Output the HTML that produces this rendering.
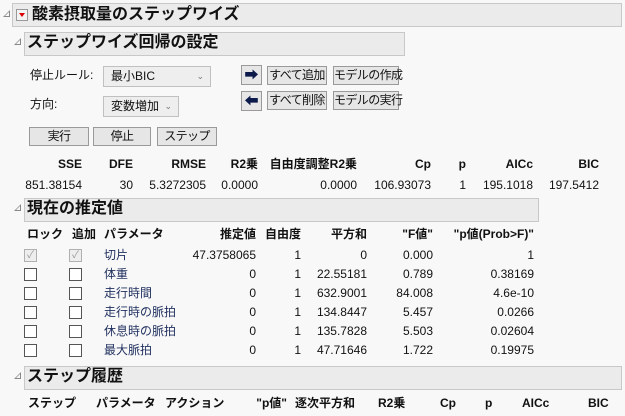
<!DOCTYPE html>
<html><head><meta charset="utf-8"><style>
body{margin:0;width:625px;height:416px;background:#f8f8f8;font-family:"Liberation Sans","Noto Sans CJK JP",sans-serif;font-size:12px;color:#111;position:relative;overflow:hidden}
.a{position:absolute;white-space:nowrap;line-height:14px}
.r{position:absolute;white-space:nowrap;line-height:14px;transform:translateX(-100%)}
.b{font-weight:bold}
.hd{position:absolute;background:#ebebeb;border:1px solid #c8c8c8;box-sizing:border-box}
.tt{position:absolute;font-weight:bold;font-size:16px;line-height:18px;white-space:nowrap}
.tri{position:absolute;width:0;height:0;border-left:7px solid transparent;border-bottom:7px solid #888}
.tri:after{content:"";position:absolute;left:-5px;top:2px;width:0;height:0;border-left:4px solid transparent;border-bottom:4px solid #f8f8f8}
.btn{position:absolute;background:#e6e6e6;border:1px solid #9a9a9a;box-sizing:border-box;text-align:center;font-size:12px;line-height:17px;white-space:nowrap;letter-spacing:-0.6px;overflow:visible}
.dd{position:absolute;background:#eeeeee;border:1px solid #c0c0c0;box-sizing:border-box;font-size:12px;line-height:18px;padding-left:7px;white-space:nowrap}
.dd span{position:absolute;right:6px;top:0;color:#777;font-size:9px}
.cb{position:absolute;width:13px;height:13px;border:1px solid #555;background:#fff;box-sizing:border-box}
.cb.g{border-color:#b0b0b0;background:#eeeeee;color:#999;font-size:10px;line-height:11px;text-align:center}
.p{color:#1f2f5f}
</style></head><body>
<div class="tri" style="left:3px;top:10px"></div>
<div class="hd" style="left:12px;top:3px;width:610px;height:24px"></div>
<div style="position:absolute;left:16px;top:9px;width:12px;height:12px;border:1px solid #999;background:#f4f4f4;box-sizing:border-box"><div style="position:absolute;left:2px;top:3px;border-left:3px solid transparent;border-right:3px solid transparent;border-top:4px solid #d00"></div></div>
<div class="tt" style="left:32px;top:6px">酸素摂取量のステップワイズ</div>

<div class="tri" style="left:14px;top:38px"></div>
<div class="hd" style="left:24px;top:32px;width:381px;height:24px"></div>
<div class="tt" style="left:27px;top:34px">ステップワイズ回帰の設定</div>

<div class="a" style="left:30px;top:68px">停止ルール:</div>
<div class="dd" style="left:103px;top:66px;width:108px;height:21px">最小BIC<span>⌄</span></div>
<div class="a" style="left:30px;top:97px">方向:</div>
<div class="dd" style="left:103px;top:96px;width:76px;height:21px">変数増加<span>⌄</span></div>

<div class="btn" style="left:241px;top:65px;width:21px;height:20px;font-size:14px;line-height:18px;color:#0b1a4a;letter-spacing:0">➡</div>
<div class="btn" style="left:241px;top:91px;width:21px;height:20px;font-size:14px;line-height:18px;color:#0b1a4a;letter-spacing:0">⬅</div>
<div class="btn" style="left:267px;top:66px;width:60px;height:19px">すべて追加</div>
<div class="btn" style="left:333px;top:66px;width:66px;height:19px">モデルの作成</div>
<div class="btn" style="left:267px;top:91px;width:60px;height:19px">すべて削除</div>
<div class="btn" style="left:333px;top:91px;width:66px;height:19px">モデルの実行</div>

<div class="btn" style="left:29px;top:127px;width:60px;height:19px">実行</div>
<div class="btn" style="left:93px;top:127px;width:58px;height:19px">停止</div>
<div class="btn" style="left:157px;top:127px;width:60px;height:19px">ステップ</div>

<div class="r b" style="left:82px;top:157px">SSE</div>
<div class="r b" style="left:133px;top:157px">DFE</div>
<div class="r b" style="left:206px;top:157px">RMSE</div>
<div class="r b" style="left:258px;top:157px">R2乗</div>
<div class="r b" style="left:357px;top:157px">自由度調整R2乗</div>
<div class="r b" style="left:431px;top:157px">Cp</div>
<div class="r b" style="left:466px;top:157px">p</div>
<div class="r b" style="left:533px;top:157px">AICc</div>
<div class="r b" style="left:599px;top:157px">BIC</div>
<div class="r" style="left:82px;top:178px">851.38154</div>
<div class="r" style="left:133px;top:178px">30</div>
<div class="r" style="left:206px;top:178px">5.3272305</div>
<div class="r" style="left:258px;top:178px">0.0000</div>
<div class="r" style="left:357px;top:178px">0.0000</div>
<div class="r" style="left:431px;top:178px">106.93073</div>
<div class="r" style="left:466px;top:178px">1</div>
<div class="r" style="left:533px;top:178px">195.1018</div>
<div class="r" style="left:599px;top:178px">197.5412</div>

<div class="tri" style="left:14px;top:204px"></div>
<div class="hd" style="left:24px;top:198px;width:515px;height:24px"></div>
<div class="tt" style="left:27px;top:200px">現在の推定値</div>

<div class="a b" style="left:27px;top:227px">ロック</div>
<div class="a b" style="left:72px;top:227px">追加</div>
<div class="a b" style="left:104px;top:227px">パラメータ</div>
<div class="r b" style="left:256px;top:227px">推定値</div>
<div class="a b" style="left:265px;top:227px">自由度</div>
<div class="r b" style="left:367px;top:227px">平方和</div>
<div class="r b" style="left:433px;top:227px">"F値"</div>
<div class="r b" style="left:534px;top:227px">"p値(Prob&gt;F)"</div>

<div class="cb g" style="left:24px;top:249px">✓</div><div class="cb g" style="left:69px;top:249px">✓</div>
<div class="a p" style="left:104px;top:248px">切片</div>
<div class="r" style="left:256px;top:248px">47.3758065</div><div class="r" style="left:301px;top:248px">1</div><div class="r" style="left:367px;top:248px">0</div><div class="r" style="left:433px;top:248px">0.000</div><div class="r" style="left:534px;top:248px">1</div>

<div class="cb" style="left:24px;top:268px"></div><div class="cb" style="left:69px;top:268px"></div>
<div class="a p" style="left:104px;top:267px">体重</div>
<div class="r" style="left:256px;top:267px">0</div><div class="r" style="left:301px;top:267px">1</div><div class="r" style="left:367px;top:267px">22.55181</div><div class="r" style="left:433px;top:267px">0.789</div><div class="r" style="left:534px;top:267px">0.38169</div>

<div class="cb" style="left:24px;top:287px"></div><div class="cb" style="left:69px;top:287px"></div>
<div class="a p" style="left:104px;top:286px">走行時間</div>
<div class="r" style="left:256px;top:286px">0</div><div class="r" style="left:301px;top:286px">1</div><div class="r" style="left:367px;top:286px">632.9001</div><div class="r" style="left:433px;top:286px">84.008</div><div class="r" style="left:534px;top:286px">4.6e-10</div>

<div class="cb" style="left:24px;top:306px"></div><div class="cb" style="left:69px;top:306px"></div>
<div class="a p" style="left:104px;top:305px">走行時の脈拍</div>
<div class="r" style="left:256px;top:305px">0</div><div class="r" style="left:301px;top:305px">1</div><div class="r" style="left:367px;top:305px">134.8447</div><div class="r" style="left:433px;top:305px">5.457</div><div class="r" style="left:534px;top:305px">0.0266</div>

<div class="cb" style="left:24px;top:325px"></div><div class="cb" style="left:69px;top:325px"></div>
<div class="a p" style="left:104px;top:324px">休息時の脈拍</div>
<div class="r" style="left:256px;top:324px">0</div><div class="r" style="left:301px;top:324px">1</div><div class="r" style="left:367px;top:324px">135.7828</div><div class="r" style="left:433px;top:324px">5.503</div><div class="r" style="left:534px;top:324px">0.02604</div>

<div class="cb" style="left:24px;top:344px"></div><div class="cb" style="left:69px;top:344px"></div>
<div class="a p" style="left:104px;top:343px">最大脈拍</div>
<div class="r" style="left:256px;top:343px">0</div><div class="r" style="left:301px;top:343px">1</div><div class="r" style="left:367px;top:343px">47.71646</div><div class="r" style="left:433px;top:343px">1.722</div><div class="r" style="left:534px;top:343px">0.19975</div>

<div class="tri" style="left:14px;top:372px"></div>
<div class="hd" style="left:24px;top:366px;width:598px;height:24px"></div>
<div class="tt" style="left:27px;top:368px">ステップ履歴</div>

<div class="a b" style="left:28px;top:396px">ステップ</div>
<div class="a b" style="left:96px;top:396px">パラメータ</div>
<div class="a b" style="left:165px;top:396px">アクション</div>
<div class="r b" style="left:287px;top:396px">"p値"</div>
<div class="a b" style="left:295px;top:396px">逐次平方和</div>
<div class="a b" style="left:378px;top:396px">R2乗</div>
<div class="a b" style="left:440px;top:396px">Cp</div>
<div class="a b" style="left:485px;top:396px">p</div>
<div class="a b" style="left:522px;top:396px">AICc</div>
<div class="a b" style="left:588px;top:396px">BIC</div>
</body></html>
